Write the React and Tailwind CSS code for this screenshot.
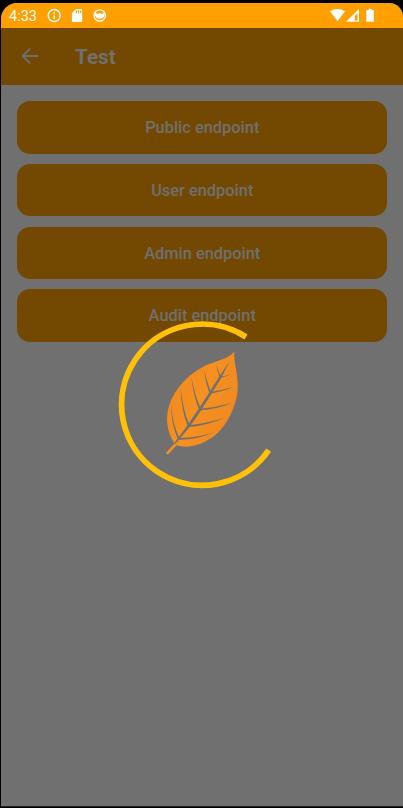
const endpoints = ['Public endpoint', 'User endpoint', 'Admin endpoint', 'Audit endpoint'];

function StatusBar() {
  return (
    <div className="flex h-[25px] shrink-0 items-center bg-[#ffa000] pl-[8px] text-white">
      <span className="w-[38px] pt-px text-[14.5px] leading-[25px]">4:33</span>
      <svg width="60" height="25" viewBox="47 3 60 25" fill="none">
        <circle cx="54.2" cy="15.5" r="6" stroke="#fff" strokeWidth="1.4" />
        <path d="M53.5 12h1.5v1.5h-1.5zM53.5 14.7h1.5v4.3h-1.5z" fill="#fff" />
        <path
          fillRule="evenodd"
          d="M76 9h5.2q1 0 1 1v11q0 1-1 1h-8.3q-1 0-1-1v-8zM75.8 10.6v2.6h1.2v-2.6zM78 10.6v2.6h1.2v-2.6zM80.1 10.6v2.6h1.2v-2.6z"
          fill="#fff"
        />
        <circle cx="99.7" cy="15.5" r="5.7" stroke="#fff" strokeWidth="1.3" />
        <path d="M95 12.200l2.300 1.900.8-.5h3.200l.8.5 2.300-1.900v3.400q-.4 3.100-4.700 3.100t-4.700-3.100z" fill="#fff" />
      </svg>
      <svg className="mr-[26px] ml-auto" width="48" height="25" viewBox="329 3 48 25" fill="none">
        <path d="M330 11.2Q337.5 6.6 345 11.2L337.5 21.2Z" fill="#fff" />
        <path fillRule="evenodd" d="M359 9v12.8h-13zM357.5 13.3l-2.7 2.8v4.3h2.7z" fill="#fff" />
        <path d="M368.7 8.8h2.8V10h1.7q.7 0 .7.7v10.4q0 .7-.7.7h-6.2q-.7 0-.7-.7V10.700q0-.7.7-.7h1.7z" fill="#fff" />
      </svg>
    </div>
  );
}

function Header() {
  return (
    <header className="flex h-[57px] shrink-0 items-center bg-[#734800] pl-[20px] text-[#707070]">
      <svg className="mb-px" width="18" height="18" viewBox="0 0 18 18" fill="none" stroke="currentColor" strokeWidth="1.8">
        <path d="M17 9H2M9.300 1.400L1.700 9l7.600 7.600" />
      </svg>
      <h1 className="ml-[36px] text-[20.700px] leading-[28px] font-bold">Test</h1>
    </header>
  );
}

function Loader() {
  return (
    <svg className="absolute top-[320px] left-[118px]" width="170" height="170" viewBox="118 320 170 170" fill="none">
      <defs>
        <linearGradient id="leaf" x1="168" y1="390" x2="236" y2="420" gradientUnits="userSpaceOnUse">
          <stop stopColor="#f28a20" />
          <stop offset="0.45" stopColor="#f69020" />
          <stop offset="1" stopColor="#f18820" />
        </linearGradient>
      </defs>
      <path d="M246 337A80.600 80.600 0 1 0 268.700 450.200" stroke="#ffc107" strokeWidth="5.800" />
      <path
        d="M234.200 351.800C228 360 213 361 201 368C186 376.500 174 390 169 406C165.500 418 166.500 431 174.500 443.500L166 452.700Q166.600 455 168.600 454L176.500 445.300C190 449.500 204 443.500 215 435.500C228 424 235.500 407 237.500 392C239 376 233.500 363 234.200 351.800Z"
        fill="url(#leaf)"
      />
      <g fill="#707070">
        <path d="M230 360.600L221.500 377.500L211.300 394L201.300 410L190 426.500L178 441L174.800 444.300L174.200 443.200L187.500 425.200L198.800 408.500L208.900 393L219 377Z" />
        <path d="M216.100 363.500Q218 371 221 377L219.900 378Q217.200 371 216.100 363.500Z" />
        <path d="M204 369Q206.800 382 211 392.500L209.600 394Q205.200 382 204 369Z" />
        <path d="M191.300 376.500Q194.800 396 200.800 408.500L199.300 410.300Q193.300 396 191.300 376.500Z" />
        <path d="M180.400 386.500Q183 411 189.500 425L188 427Q181.300 411 180.400 386.500Z" />
        <path d="M171.100 403Q172 423 179.500 438.500L178.200 440.200Q170.600 423 171.100 403Z" />
        <path d="M220 376.900Q227 375.600 232.500 373.500Q226.500 377 219.300 378.200Z" />
        <path d="M210 392Q223 390.200 233.500 386.800Q222.500 392 209.300 393.700Z" />
        <path d="M200 408.700Q217 407.200 232 403Q217 409.300 199.300 410.500Z" />
        <path d="M189 425.200Q208 423.300 224.700 417.800Q207.500 425.700 187.700 427.200Z" />
        <path d="M180 438Q199 437.300 214.200 432.200Q199 439.400 178.300 439.900Z" />
      </g>
    </svg>
  );
}

export default function App() {
  return (
    <div className="relative h-[808px] w-[403px] overflow-hidden bg-black pt-[3px] pl-px font-['Roboto','Liberation_Sans',sans-serif]">
      <div className="flex h-[804px] flex-col overflow-hidden rounded-tl-[16px] rounded-tr-[14px] border-b border-[#202020] bg-[#707070]">
        <StatusBar />
        <Header />
        <main className="flex flex-col gap-[10.300px] pt-[16.300px] pr-[16px] pl-[16px]">
          {endpoints.map((label) => (
            <button
              key={label}
              className="h-[52.400px] w-full rounded-[13px] bg-[#734800] pt-[2px] pl-[0.500px] text-[16.400px] font-medium text-[#707070]"
            >
              {label}
            </button>
          ))}
        </main>
      </div>
      <Loader />
    </div>
  );
}
